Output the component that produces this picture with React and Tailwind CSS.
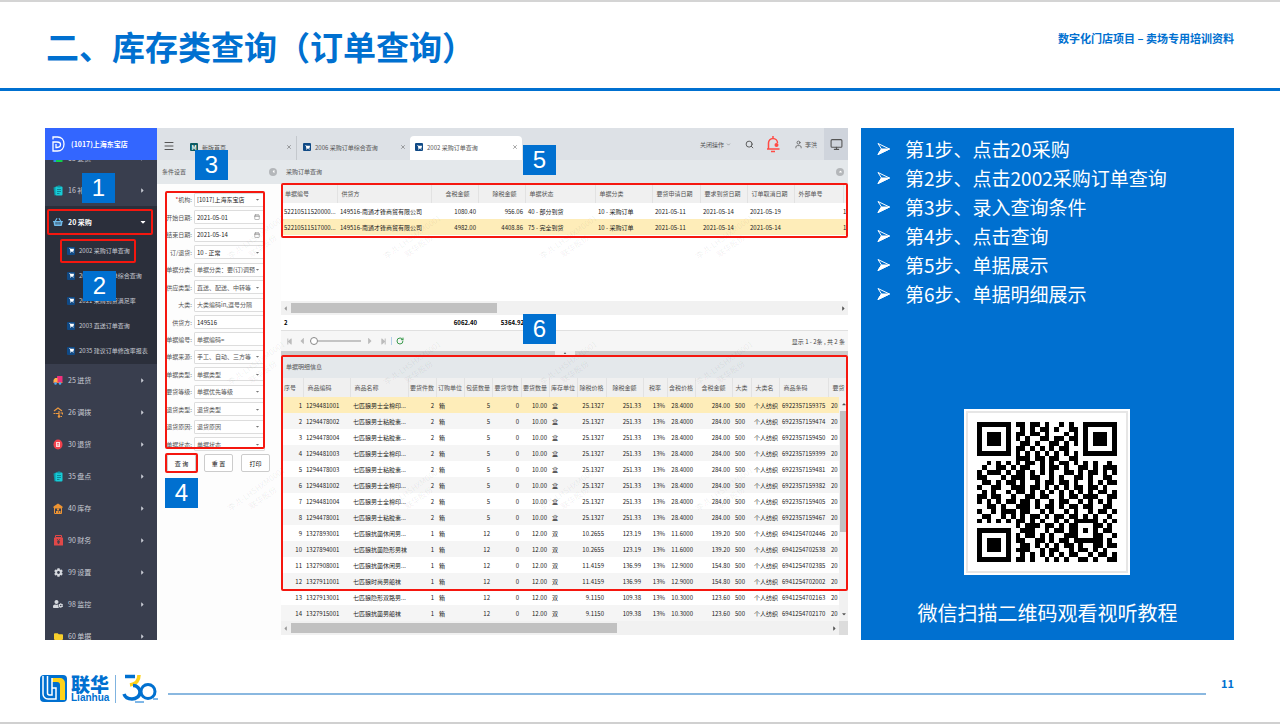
import { clsx } from 'clsx'
import { Menu, Search, User, Monitor, ChevronDown, Calendar, RotateCw, X } from 'lucide-react'
import {
  FaShoppingBasket, FaCog, FaUserCog, FaFolder, FaShoppingCart, FaCaretRight,
  FaCaretDown, FaCaretLeft, FaCaretUp, FaStepBackward, FaStepForward,
} from 'react-icons/fa'

const STEPS = [
  '第1步、点击20采购',
  '第2步、点击2002采购订单查询',
  '第3步、录入查询条件',
  '第4步、点击查询',
  '第5步、单据展示',
  '第6步、单据明细展示',
]

const BookIcon = () => (
  <svg width="10" height="10" viewBox="0 0 20 20" className="shrink-0">
    <rect x="1" y="2" width="5" height="16" fill="#2b8be8" />
    <rect x="6" y="2" width="13" height="16" fill="#0fd04a" />
  </svg>
)

const ClipboardIcon = () => (
  <svg width="10" height="11" viewBox="0 0 20 22" className="shrink-0">
    <path d="M1 5l6-2v17l-4 1z" fill="#0c97a6" />
    <rect x="5" y="3" width="14" height="18" rx="2" fill="#17cbd6" />
    <rect x="9" y="1" width="6" height="4" rx="1" fill="#0c97a6" />
    <path d="M8 9h8M8 13h8M8 17h5" stroke="#0b6f80" strokeWidth="1.500" />
  </svg>
)

const TruckIcon = () => (
  <svg width="10" height="10" viewBox="0 0 20 20" className="shrink-0">
    <rect x="8" y="2" width="11" height="12" rx="1" fill="#f0307c" />
    <path d="M1 15V10l3-4h5v9z" fill="#ffb04a" />
    <path d="M1 14h18v2H1z" fill="#f0704a" />
    <circle cx="5" cy="17" r="2.500" fill="#4aa8f0" />
    <circle cx="14" cy="17" r="2.500" fill="#4aa8f0" />
  </svg>
)

const TransferIcon = () => (
  <svg width="10" height="11" viewBox="0 0 20 22" fill="none" stroke="#ee9a40" strokeWidth="2.200" className="shrink-0">
    <path d="M2 8l8-6 8 6M5 13h7v7M12 8v5" />
    <path d="M1 13h3M15 12h4v3M15 19h3" />
    <circle cx="12" cy="19" r="1.500" fill="#ee9a40" />
  </svg>
)

const ReturnIcon = () => (
  <svg width="10" height="11" viewBox="0 0 20 22" className="shrink-0">
    <ellipse cx="10" cy="11" rx="9" ry="10" fill="#f2414c" />
    <path d="M6 6h8v10H6z" fill="#ffd9db" />
    <path d="M8 9h4M8 12h4" stroke="#f2414c" strokeWidth="1.500" />
  </svg>
)

const StockIcon = () => (
  <svg width="10" height="11" viewBox="0 0 20 22" className="shrink-0">
    <path d="M10 1l9 6v3H1V7z" fill="#ee9433" />
    <path d="M3 10h14v11H3z" fill="none" stroke="#ee9433" strokeWidth="2" />
    <path d="M6 20v-4h4v4zM11 20v-4h4v4zM8 15v-4h4v4z" fill="#ee9433" />
  </svg>
)

const FinanceIcon = () => (
  <svg width="9" height="11" viewBox="0 0 18 22" className="shrink-0">
    <path d="M3 1h12v4H3z" fill="none" stroke="#e04848" strokeWidth="2" />
    <rect y="5" width="18" height="16" rx="1" fill="#e04848" />
    <path d="M6 8l3 4 3-4M9 12v6M6 13h6M6 15.500h6" fill="none" stroke="#393e4e" strokeWidth="1.500" />
  </svg>
)

const BasketIcon = () => <FaShoppingBasket size={10} className="shrink-0 text-[#6fb9e8]" />
const SettingsIcon = () => <FaCog size={9} className="shrink-0 text-[#d5d8de]" />
const MonitorUserIcon = () => <FaUserCog size={10} className="shrink-0 text-[#d5d8de]" />
const FolderIcon = () => <FaFolder size={9} className="shrink-0 text-[#f8cf2c]" />

const SUB_MENU = ['2002 采购订单查询', '2006 采购订单综合查询', '2021 采购到货满足率', '2003 直送订单查询', '2035 建议订单修改率报表']

const MENU = [
  { label: '25 进货', icon: TruckIcon },
  { label: '26 调拨', icon: TransferIcon },
  { label: '30 退货', icon: ReturnIcon },
  { label: '35 盘点', icon: ClipboardIcon },
  { label: '40 库存', icon: StockIcon },
  { label: '90 财务', icon: FinanceIcon },
  { label: '99 设置', icon: SettingsIcon },
  { label: '98 监控', icon: MonitorUserIcon },
  { label: '60 单据', icon: FolderIcon },
]

const FIELDS = [
  { label: '机构', value: '[1017]上海东宝店', kind: 'select', required: true, dark: true },
  { label: '开始日期', value: '2021-05-01', kind: 'date', dark: true },
  { label: '结束日期', value: '2021-05-14', kind: 'date', dark: true },
  { label: '订/退货', value: '10 - 正常', kind: 'select', dark: true },
  { label: '单据分类', value: '单据分类：要(订)调预配', kind: 'select' },
  { label: '供应类型', value: '直送、配送、中转等', kind: 'select' },
  { label: '大类', placeholder: '大类编码in,逗号分隔', kind: 'text' },
  { label: '供货方', value: '149516', kind: 'text', dark: true },
  { label: '单据编号', placeholder: '单据编码=', kind: 'text' },
  { label: '单据来源', value: '手工、自动、三方等', kind: 'select' },
  { label: '单据类型', value: '单据类型', kind: 'select' },
  { label: '要货等级', value: '单据优先等级', kind: 'select' },
  { label: '退货类型', value: '退货类型', kind: 'select' },
  { label: '退货原因', value: '退货原因', kind: 'select' },
  { label: '单据状态', value: '单据状态', kind: 'select' },
]

const L = 'text-left pl-[3px]'
const R = 'text-right pr-[2px]'
const C = 'text-center'

const ORDER_COLS = [
  { title: '单据编号', w: 'w-[56px]', cell: L },
  { title: '供货方', w: 'w-[94px]', cell: L },
  { title: '含税金额', w: 'w-[47px]', head: 'text-right pr-2', cell: R },
  { title: '除税金额', w: 'w-[47px]', head: 'text-right pr-2', cell: R },
  { title: '单据状态', w: 'w-[70px]', cell: L },
  { title: '单据分类', w: 'w-[57px]', cell: L },
  { title: '要货申请日期', w: 'w-[48px]', cell: L },
  { title: '要求到货日期', w: 'w-[47px]', cell: L },
  { title: '订单取消日期', w: 'w-[47px]', cell: L },
  { title: '外部单号', w: 'w-[49px]', cell: L },
  { title: '', w: '', cell: 'text-left' },
]

const ORDERS = [
  ['52210511520000...', '149516-南通才锋商贸有限公司', '1080.40', '956.06', '40 - 部分到货', '10 - 采购订单', '2021-05-11', '2021-05-14', '2021-05-19', '', '1'],
  ['52210511517000...', '149516-南通才锋商贸有限公司', '4982.00', '4408.86', '75 - 完全到货', '10 - 采购订单', '2021-05-11', '2021-05-14', '2021-05-14', '', '1'],
]

const DETAIL_COLS = [
  { title: '序号', w: 'w-[22px]', head: L, cell: 'text-right pr-px' },
  { title: '商品编码', w: 'w-[47px]', cell: L },
  { title: '商品名称', w: 'w-[58px]', cell: L },
  { title: '要货件数', w: 'w-[28px]', head: C, cell: R },
  { title: '订购单位', w: 'w-[28px]', head: C, cell: L },
  { title: '包装数量', w: 'w-[28px]', head: C, cell: R },
  { title: '要货零数', w: 'w-[29px]', head: C, cell: R },
  { title: '要货数量', w: 'w-[28px]', head: C, cell: R },
  { title: '库存单位', w: 'w-[28px]', head: C, cell: L },
  { title: '除税价格', w: 'w-[29px]', head: C, cell: R },
  { title: '除税金额', w: 'w-[37px]', head: C, cell: R },
  { title: '税率', w: 'w-[24px]', head: C, cell: R },
  { title: '含税价格', w: 'w-[28px]', head: C, cell: R },
  { title: '含税金额', w: 'w-[37px]', head: C, cell: R },
  { title: '大类', w: 'w-[19px]', head: C, cell: L },
  { title: '大类名', w: 'w-[28px]', cell: L },
  { title: '商品条码', w: 'w-[49px]', cell: L },
  { title: '要货', w: '', cell: L },
]

const boxed = (no, code, name, barcode) =>
  [no, code, name, '2', '箱', '5', '0', '10.00', '盒', '25.1327', '251.33', '13%', '28.4000', '284.00', '500', '个人纺织', barcode, '20']
const paired = (no, code, name, net, netSum, price, sum, barcode) =>
  [no, code, name, '1', '箱', '12', '0', '12.00', '双', net, netSum, '13%', price, sum, '500', '个人纺织', barcode, '20']

const DETAILS = [
  boxed(1, '1294481001', '七匹狼男士全棉印...', '6922357159375'),
  boxed(2, '1294478002', '七匹狼男士粘胶素...', '6922357159474'),
  boxed(3, '1294478004', '七匹狼男士粘胶素...', '6922357159450'),
  boxed(4, '1294481003', '七匹狼男士全棉印...', '6922357159399'),
  boxed(5, '1294478003', '七匹狼男士粘胶素...', '6922357159481'),
  boxed(6, '1294481002', '七匹狼男士全棉印...', '6922357159382'),
  boxed(7, '1294481004', '七匹狼男士全棉印...', '6922357159405'),
  boxed(8, '1294478001', '七匹狼男士粘胶素...', '6922357159467'),
  paired(9, '1327893001', '七匹狼抗菌休闲男...', '10.2655', '123.19', '11.6000', '139.20', '6941254702446'),
  paired(10, '1327894001', '七匹狼抗菌隐形男袜', '10.2655', '123.19', '11.6000', '139.20', '6941254702538'),
  paired(11, '1327908001', '七匹狼抗菌休闲男...', '11.4159', '136.99', '12.9000', '154.80', '6941254702385'),
  paired(12, '1327911001', '七匹狼时尚男船袜', '11.4159', '136.99', '12.9000', '154.80', '6941254702002'),
  paired(13, '1327913001', '七匹狼隐形双路男...', '9.1150', '109.38', '10.3000', '123.60', '6941254702163'),
  paired(14, '1327915001', '七匹狼抗菌男船袜', '9.1150', '109.38', '10.3000', '123.60', '6941254702170'),
]

const QR = [
  '#######.##.##.#..#.#..#######',
  '#.....#..#.#.##.#..##.#.....#',
  '#.###.#.##.##.#...#.#.#.###.#',
  '#.###.#.#.#..##.##.##.#.###.#',
  '#.###.#..##.#..##.#.#.#.###.#',
  '#.....#.##.#.#.#.##...#.....#',
  '#######.#.#.#.#.#.#.#.#######',
  '........###.##.##..##........',
  '..#.#.#.#.##.#.#.##.#.#.#..#.',
  '.#..##.#.##..#.##.#..##.#.###',
  '#.###.#.##.#.#.#..##.#.##.#.#',
  '##...#.###.##..#.#..##.#..##.',
  '.##.#.##.#..#.##.##.#..#.#.##',
  '#..##..###.##.#.#.#.##.##.#..',
  '.#.#..#.##.#.#.#.#.#.#.#.##.#',
  '##.##..#..##.##..#.##.###..##',
  '#.#.#.##.##.#..#.##..#.#.#.#.',
  '..##.#..###.#.##.#.##.##..##.',
  '#..#.###.##..#.#..#.#..#.##.#',
  '.##..#.#.#.##.#.##.##.#.#..#.',
  '#.#.#.#.##.#.#..#.#.#####.#.#',
  '........#.###.##.#.##...##.#.',
  '#######..###..#.##.##.#.#.##.',
  '#.....#.#.##.#.#..###...##..#',
  '#.###.#.##..##.#.##.######.#.',
  '#.###.#..##.#.#.#.##.#..##.##',
  '#.###.#.###..#.##..#.##.#.#..',
  '#.....#..#.#.#.#.#.##..#.##.#',
  '#######.##.#..#.#.#..##.#..##',
]

const WATERMARKS = [
  'left-[180px] top-[102px]', 'left-[336px] top-[102px]', 'left-[492px] top-[102px]', 'left-[648px] top-[102px]',
  'left-[180px] top-[228px]', 'left-[336px] top-[228px]', 'left-[492px] top-[228px]', 'left-[648px] top-[228px]',
  'left-[180px] top-[354px]', 'left-[336px] top-[354px]', 'left-[492px] top-[354px]', 'left-[648px] top-[354px]',
]

const Badge = ({ n, className }) => (
  <span className={clsx('absolute z-20 flex h-[30px] w-[33px] items-center justify-center bg-[#0070d0] font-["Liberation_Sans",sans-serif] text-2xl text-white', className)}>
    {n}
  </span>
)

const Frame = ({ className }) => (
  <span className={clsx('pointer-events-none absolute z-10 rounded-xs border-2 border-[#f5170f]', className)} />
)

const CartIcon = () => (
  <span className="flex size-2 shrink-0 items-center justify-center rounded-[1px] bg-[#104a86] text-white">
    <FaShoppingCart size={5} />
  </span>
)

const MenuItem = ({ label, icon: Icon, open }) => (
  <button className={clsx('flex h-8 w-full shrink-0 items-center text-[7px]', open ? 'font-bold text-white' : 'text-[#c9ccd4]')}>
    <span className="flex w-[23px] justify-end pr-[5px]"><Icon /></span>
    <span className="flex-1 text-left">{label}</span>
    <span className="flex w-[18px]">{open ? <FaCaretDown size={8} /> : <FaCaretRight size={7} />}</span>
  </button>
)

const Sidebar = () => (
  <aside className="relative flex w-28 shrink-0 flex-col bg-[#393e4e]">
    <div className="flex h-8 shrink-0 items-center gap-1.5 bg-[#3366ff] pl-[7px] text-[7px] font-bold text-white">
      <svg width="13" height="16" viewBox="0 0 13 16" fill="none" stroke="currentColor" strokeWidth="1.3">
        <path d="M1 3.500V1h4.500c4 0 6.500 3 6.500 7s-2.500 7-6.500 7H1V6h4c2.200 0 3.500.8 3.500 2.600S7.200 11.500 5 11.500H4V8" />
      </svg>
      (1017)上海东宝店
    </div>
    <nav className="flex min-h-0 flex-1 basis-0 flex-col overflow-hidden">
      <div className="flex h-[14px] shrink-0 flex-col justify-end overflow-hidden">
        <MenuItem label="15 要货" icon={BookIcon} />
      </div>
      <MenuItem label="16 补货" icon={ClipboardIcon} />
      <div className="shrink-0 bg-[#2b2f3b] pb-px">
        <MenuItem label="20 采购" icon={BasketIcon} open />
        {SUB_MENU.map(s => (
          <a key={s} href="#" className="flex h-[25px] items-center gap-1 pl-[22px] text-[6px] whitespace-nowrap text-[#c9ccd4]">
            <CartIcon />{s}
          </a>
        ))}
      </div>
      {MENU.map(m => <MenuItem key={m.label} {...m} />)}
    </nav>
    <Frame className="top-[81px] left-[2px] h-[26px] w-[106px]" />
    <Frame className="top-[111px] left-[15px] h-[24px] w-[76px]" />
    <Badge n={1} className="top-[45px] left-[37px]" />
    <Badge n={2} className="top-[143px] left-[38px]" />
  </aside>
)

const Tab = ({ label, active, home, className }) => (
  <div className={clsx('flex items-center gap-1 self-end pr-1', active ? 'h-6 rounded-t-sm bg-white pb-[2px]' : 'h-6 pb-[2px]', className)}>
    {home
      ? <span className="flex size-2 items-center justify-center rounded-[1px] bg-[#0d5c63] text-[6px] font-bold text-white">M</span>
      : <CartIcon />}
    <span className="flex-1">{label}</span>
    <button aria-label={`关闭 ${label}`}><X size={6} /></button>
  </div>
)

const BellIcon = () => (
  <svg width="14" height="18" viewBox="0 0 14 18" fill="none" stroke="currentColor" strokeWidth="1.500">
    <path d="M2.500 14V8a4.500 4.500 0 0 1 9 0M2.500 14H1M2.500 14h11M7 3.500V1M5 16.500h4" />
    <circle cx="10.500" cy="10" r="2" fill="currentColor" stroke="none" />
  </svg>
)

const TopBar = () => (
  <div className="flex h-8 shrink-0 items-center bg-[#dde1e6] text-[#555]">
    <button aria-label="菜单" className="w-[33px] pt-1 pl-[6px]"><Menu size={12} /></button>
    <Tab label="新版首页" home className="w-[107px] border-r border-[#c4c8cd]" />
    <Tab label="2006 采购订单综合查询" className="w-[113px] pl-[6px]" />
    <Tab label="2002 采购订单查询" active className="w-[112px] pl-[5px]" />
    <div className="ml-auto flex h-full items-center">
      <button className="mr-[14px] flex items-center gap-0.5">关闭操作<ChevronDown size={5} /></button>
      <button aria-label="搜索" className="mr-3"><Search size={9} strokeWidth={2.5} /></button>
      <button aria-label="消息" className="mr-[14px] text-[#ff4b45]"><BellIcon /></button>
      <button className="mr-[7px] flex items-center gap-0.5"><User size={9} />李洪</button>
      <button aria-label="全屏" className="flex h-full w-6 items-center justify-center bg-[#cfd4dc]"><Monitor size={13} /></button>
    </div>
  </div>
)

const Field = ({ label, value, placeholder, kind, required, dark }) => (
  <div className="flex min-h-0 flex-1 items-center gap-[2px]">
    <label htmlFor={label} className="w-[35px] text-right whitespace-nowrap text-[#555]">
      {required && <span className="text-red-600">*</span>}{label}:
    </label>
    <div className={clsx('flex h-[14px] min-w-0 flex-1 items-center rounded-[1px] border border-[#ddd] bg-white pr-1 pl-[2px]', dark ? 'text-[#222]' : 'text-[#555]')}>
      {kind === 'select'
        ? <select id={label} className="min-w-0 flex-1 appearance-none"><option>{value}</option></select>
        : <input id={label} type="text" defaultValue={value} placeholder={placeholder} className="min-w-0 flex-1 placeholder:text-[#555]" />}
      {kind === 'select' && <FaCaretDown size={5} className="shrink-0 text-[#777]" />}
      {kind === 'date' && <Calendar size={6} className="shrink-0 text-[#777]" />}
    </div>
  </div>
)

const PanelTitle = ({ children, className, dot }) => (
  <div className={clsx('flex shrink-0 items-center justify-between bg-[#e4e8eb] pr-1 pb-px pl-[5px] text-[#555]', className)}>
    {children}
    {dot && (
      <span className="flex size-2 items-center justify-center rounded-full bg-[#b4b7ba] text-white">
        {dot === 'left' ? <FaCaretLeft size={5} /> : <FaCaretUp size={5} />}
      </span>
    )}
  </div>
)

const Conditions = () => (
  <form className="relative flex w-[124px] shrink-0 flex-col bg-[#fdfdfd]" onSubmit={e => e.preventDefault()}>
    <PanelTitle className="h-6" dot="left">条件设置</PanelTitle>
    <div className="mt-[7px] mr-4 flex h-[262px] flex-col">
      {FIELDS.map(f => <Field key={f.label} {...f} />)}
    </div>
    <div className="mt-px flex gap-2 pl-[10px]">
      {['查 询', '重 置', '打印'].map(t => (
        <button key={t} className="flex h-[18px] w-[29px] items-center justify-center rounded-xs border border-[#ccc] bg-white text-[#111]">{t}</button>
      ))}
    </div>
    <Frame className="top-[31px] left-2 h-[258px] w-[100px]" />
    <Frame className="top-[293px] left-2 h-[20px] w-[33px]" />
    <Badge n={3} className="top-[-10px] left-[38px]" />
    <Badge n={4} className="top-[318px] left-2" />
  </form>
)

const DataTable = ({ cols, rows, headClass, rowClass }) => (
  <table className="w-full table-fixed border-collapse">
    <colgroup>{cols.map((c, i) => <col key={i} className={c.w} />)}</colgroup>
    <thead>
      <tr className={clsx('bg-[#f0f0f0] text-[#555]', headClass)}>
        {cols.map((c, i) => (
          <th key={i} className={clsx('overflow-hidden border-r border-[#e2e2e2] p-0 font-normal whitespace-nowrap', c.head ?? 'text-left pl-1')}>{c.title}</th>
        ))}
      </tr>
    </thead>
    <tbody>
      {rows.map((row, i) => (
        <tr key={i} className={clsx('h-4 text-[#222]', rowClass(i))}>
          {row.map((v, j) => (
            <td key={j} className={clsx('overflow-hidden p-0 whitespace-nowrap', cols[j].cell)}>{v}</td>
          ))}
        </tr>
      ))}
    </tbody>
  </table>
)

const HScroll = ({ thumb, corner }) => (
  <div className="flex h-[14px] shrink-0 items-center justify-between bg-[#f1f1f1] text-[#555]">
    <div className="flex h-full flex-1 items-center">
      <FaCaretLeft size={7} className="ml-px mr-[2px] shrink-0 text-[#999]" />
      <div className={clsx('h-[10px] bg-[#c1c1c1]', thumb)} />
    </div>
    <FaCaretRight size={7} className="mr-px" />
    {corner && <div className="h-full w-[9px] bg-[#dcdcdc]" />}
  </div>
)

const Pager = () => (
  <div className="flex h-[21px] shrink-0 items-center border-t border-[#e0e0e0] bg-[#f6f6f6] pr-[3px] pl-[5px] text-[#bbb]">
    <button aria-label="首页"><FaStepBackward size={7} /></button>
    <button aria-label="上一页" className="ml-1"><FaCaretLeft size={10} /></button>
    <input type="range" aria-label="页码" defaultValue="0" className="ml-[3px] h-[2px] w-[51px] appearance-none bg-[#c4c4c4] [&::-webkit-slider-thumb]:size-2 [&::-webkit-slider-thumb]:appearance-none [&::-webkit-slider-thumb]:rounded-full [&::-webkit-slider-thumb]:border [&::-webkit-slider-thumb]:border-[#888] [&::-webkit-slider-thumb]:bg-white" />
    <button aria-label="下一页" className="ml-1"><FaCaretRight size={10} /></button>
    <button aria-label="末页" className="ml-[5px]"><FaStepForward size={7} /></button>
    <span className="mx-1 h-2 border-l border-[#b5cfe8]" />
    <button aria-label="刷新" className="text-[#3a9a4c]"><RotateCw size={8} strokeWidth={3} /></button>
    <span className="ml-auto text-[#444]">显示 1 - 2条 , 共 2 条</span>
  </div>
)

const Grids = () => (
  <section className="relative flex min-w-0 flex-1 flex-col bg-white">
    <PanelTitle className="h-6" dot="up">采购订单查询</PanelTitle>
    <div className="relative h-[117px] shrink-0 overflow-hidden">
      <DataTable cols={ORDER_COLS} rows={ORDERS} headClass="h-[19px]" rowClass={i => i === 1 && 'bg-[#feedb9]'} />
    </div>
    <HScroll thumb="w-[206px]" />
    <div className="flex h-[15px] shrink-0 items-center pl-[3px] font-bold text-black">
      <span className="w-[147px]">2</span>
      <span className="w-[46px] text-right">6062.40</span>
      <span className="w-[47px] text-right">5364.92</span>
    </div>
    <Pager />
    <div className="flex h-1 shrink-0 justify-center bg-[#ccc]">
      <span className="flex w-5 justify-center bg-[#eee] text-[#333]"><FaCaretUp size={4} /></span>
    </div>
    <PanelTitle className="h-[23px]">单据明细信息</PanelTitle>
    <div className="relative shrink-0 overflow-hidden">
      <DataTable cols={DETAIL_COLS} rows={DETAILS} headClass="h-[19px]" rowClass={i => (i === 0 ? 'bg-[#feedb9]' : i % 2 ? 'bg-[#f5f5f5]' : 'bg-white')} />
      <div className="absolute top-[19px] right-0 bottom-0 flex w-[9px] flex-col items-center bg-[#f1f1f1] text-[#555]">
        <FaCaretUp size={6} className="my-1 shrink-0" />
        <div className="h-[121px] w-[7px] bg-[#c1c1c1]" />
        <FaCaretDown size={6} className="mt-auto mb-1 shrink-0" />
      </div>
    </div>
    <HScroll thumb="w-[326px]" corner />
    <Frame className="inset-x-0 top-[23px] h-[55px]" />
    <Frame className="inset-x-0 top-[195px] h-[236px]" />
    <Badge n={5} className="top-[-15px] left-[242px]" />
    <Badge n={6} className="top-[154px] left-[242px]" />
  </section>
)

const QrCode = () => (
  <div className="bg-white p-[2px]">
    <div className="border-2 border-[#e6e6e6] p-[9px]">
      <svg width="140" height="140" viewBox="0 0 29 29" shapeRendering="crispEdges" role="img" aria-label="二维码">
        {QR.map((row, y) => [...row].map((c, x) => c === '#' && <rect key={`${x}-${y}`} x={x} y={y} width="1" height="1" />))}
      </svg>
    </div>
  </div>
)

const Logo = () => (
  <div className="flex items-center">
    <svg width="27" height="27" viewBox="0 0 27 27">
      <rect width="27" height="27" rx="4" fill="#0070d0" />
      <path d="M12 3h8a5 5 0 0 1 5 5v17h-5V10a3 3 0 0 0-3-3h-5z" fill="#ffd21a" />
      <path d="M3 1v18a5 5 0 0 0 5 5h8V13h-4M7.500 1v17a2 2 0 0 0 2 2H12V3" fill="none" stroke="#fff" strokeWidth="1.500" />
    </svg>
    <div className="ml-1 flex flex-col text-[#0070d0]">
      <span className="text-[19px] leading-[18px] font-black">联华</span>
      <span className="font-['Liberation_Sans',sans-serif] text-[10px] leading-[10px] font-bold">Lianhua</span>
    </div>
    <span className="mx-1.5 h-7 border-l border-[#7fb3e0]" />
    <svg width="36" height="29" viewBox="0 0 36 29" fill="none" strokeWidth="3.500">
      <path d="M3 2.500h10" stroke="#0070d0" />
      <path d="M17 1c0 6-3 9-9 10" stroke="#ffd21a" />
      <path d="M11 11.500c4 0 7 3 7 6.500 0 4.500-4 7-8 7-4 0-7-2-8-5" stroke="#0070d0" />
      <circle cx="26" cy="17.500" r="7" stroke="#0070d0" strokeWidth="3" />
      <path d="M13 28h9M31 25h5" stroke="#0070d0" strokeWidth="1" />
    </svg>
  </div>
)

export default function App() {
  return (
    <div className="flex min-h-screen flex-col border-t-2 border-b-2 border-t-[#d4d4d4] border-b-[#d0d0d0] bg-white font-['Noto_Sans_CJK_SC',sans-serif]">
      <header className="flex h-[89px] items-start justify-between border-b-3 border-[#0070d0] pr-[46px] pl-[46px] text-[#0070d0]">
        <h1 className="pt-5 text-[33px] leading-[48px] font-bold">二、库存类查询（订单查询）</h1>
        <p className="pt-[28px] text-[11px] leading-4 font-bold">数字化门店项目 – 卖场专用培训资料</p>
      </header>

      <main className="mt-[37px] flex gap-[13px] pr-[46px] pl-[45px]">
        <div className="relative flex h-[512px] min-w-0 flex-1 overflow-hidden text-[6px] leading-[9px]">
          <Sidebar />
          <div className="flex min-w-0 flex-1 flex-col">
            <TopBar />
            <div className="flex min-h-0 flex-1">
              <Conditions />
              <Grids />
            </div>
          </div>
          {WATERMARKS.map(pos => (
            <div key={pos} aria-hidden="true" className={clsx('pointer-events-none absolute -rotate-[36deg] text-center text-[8px] leading-[11px] whitespace-nowrap text-black/7', pos)}>
              李洪-LHSHXM0001<br />联华股份
            </div>
          ))}
        </div>

        <aside className="flex w-[373px] shrink-0 flex-col items-center bg-[#0070d0] text-white">
          <ul className="w-full pt-[6px] pl-4 text-[19px] leading-[29px]">
            {STEPS.map(s => (
              <li key={s} className="flex items-center gap-[14px]">
                <svg width="14" height="14" viewBox="0 0 14 14" fill="none" stroke="currentColor">
                  <path d="M1 1.500 12.500 7 1 12.500 4.500 7z" />
                  <path d="M4.500 7h8L1 12.500z" fill="currentColor" />
                </svg>
                {s}
              </li>
            ))}
          </ul>
          <div className="mt-[101px] mr-px"><QrCode /></div>
          <p className="mt-[23px] text-xl leading-[30px]">微信扫描二维码观看视听教程</p>
        </aside>
      </main>

      <footer className="mt-[34px] flex items-start pr-[46px] pl-10">
        <Logo />
        <span className="mt-[19px] ml-[10px] h-[2px] flex-1 bg-[#8ab8e0]" />
        <span className="mt-px ml-[15px] text-[11px] leading-4 font-bold text-[#0070d0]">11</span>
      </footer>
    </div>
  )
}
